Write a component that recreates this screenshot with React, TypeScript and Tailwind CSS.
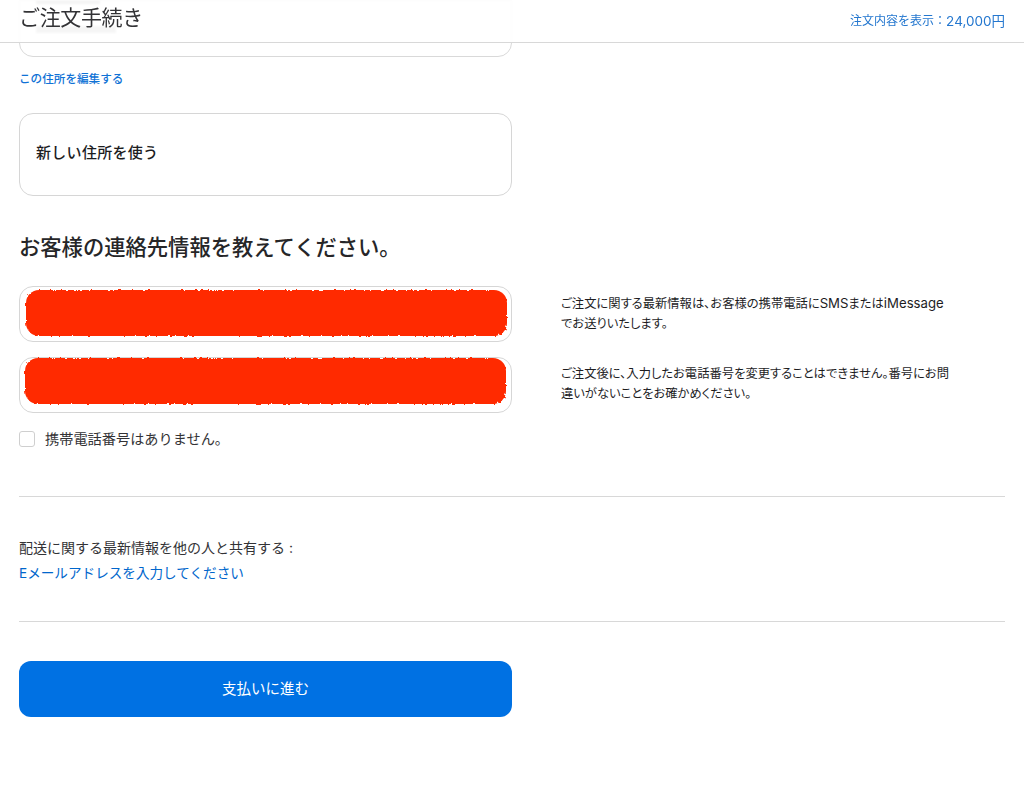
import React from 'react';

const FONT = 'font-["Inter","Noto_Sans_CJK_JP",sans-serif]';

// Scribbled-out red block laid over a redacted field
function Redaction({ className }: { className: string }) {
  return (
    <svg className={`absolute ${className}`} width="491" height="55" viewBox="0 0 491 55" aria-hidden="true">
      <filter id="scribble" x="-2%" y="-10%" width="104%" height="120%">
        <feTurbulence type="fractalNoise" baseFrequency="0.3" numOctaves="2" seed="4" />
        <feDisplacementMap in="SourceGraphic" scale="3" />
      </filter>
      <rect x="5" y="4" width="481" height="46" rx="13" fill="#ff2a00" filter="url(#scribble)" />
    </svg>
  );
}

function ContactField({ redactionClass }: { redactionClass: string }) {
  return (
    <div className="relative h-[56px] w-[493px] rounded-[14px] border border-[#d6d6d6] bg-white">
      <Redaction className={redactionClass} />
    </div>
  );
}

export default function App() {
  return (
    <div className={`h-[787px] w-[1024px] overflow-hidden bg-white text-[#1d1d1f] ${FONT}`}>
      <header className="relative z-10 flex h-[43px] items-center justify-between border-b border-[#d8d8d8] bg-white/90 px-[19px] backdrop-blur-[1px]">
        <h1 className="mb-[7px] text-[21px] leading-[28px] font-normal tracking-[-0.35px] text-[#333336]">ご注文手続き</h1>
        <a className="flex items-center text-[12px] leading-[16px] text-[#2477cf]">
          注文内容を表示：<span className="text-[13.5px]">24,000円</span>
        </a>
      </header>

      <main className="px-[19px]">
        {/* address card scrolled under the header */}
        <div className="-mt-[43px] h-[57px] w-[493px] rounded-b-[14px] border border-[#d9d9d9] bg-white px-[16px]">
          <div className="h-[3px] w-[64px] bg-[#8a8a8a]" />
          <div className="mt-[22px] h-[7px] w-[80px] bg-[#9a9a9a]" />
        </div>
        <a className="mt-[14px] block text-[11.6px] leading-[16px] font-medium text-[#0f72d6]">この住所を編集する</a>

        <div className="mt-[26px] flex h-[83px] w-[493px] items-center rounded-[14px] border border-[#d6d6d6] px-[16px] pb-[2px] text-[15px] font-medium tracking-[0.3px]">
          新しい住所を使う
        </div>

        <h2 className="mt-[36px] text-[21.3px] leading-[30px] font-medium text-[#262628]">お客様の連絡先情報を教えてください。</h2>

        <div className="mt-[24px] flex gap-[49px]">
          <div className="flex w-[493px] flex-col gap-[15px]">
            <ContactField redactionClass="-top-[1px] left-[1px]" />
            <ContactField redactionClass="-top-[4px] left-[0px]" />
            <label className="mt-[2px] flex h-[18px] items-center gap-[10px] text-[14.2px] text-[#333336]">
              <span className="h-[16px] w-[16px] rounded-[3px] border border-[#cfcfcf] bg-white" />
              携帯電話番号はありません。
            </label>
          </div>
          <div className="w-[400px] text-[12.3px] leading-[20px] text-[#1d1d1f] [font-feature-settings:'palt']">
            <p className="mt-[7px]">
              ご注文に関する最新情報は、お客様の携帯電話に<span className="text-[13.2px]">SMS</span>または<span className="text-[13.2px]">iMessage</span>
              <br />
              でお送りいたします。
            </p>
            <p className="mt-[30px]">
              ご注文後に、入力したお電話番号を変更することはできません。番号にお問
              <br />
              違いがないことをお確かめください。
            </p>
          </div>
        </div>

        <hr className="mt-[48px] border-[#d8d8d8]" />

        <p className="mt-[41px] text-[14px] leading-[20px] text-[#333336]">配送に関する最新情報を他の人と共有する :</p>
        <a className="mt-[5px] block text-[13.6px] leading-[20px] text-[#0066cc]">Eメールアドレスを入力してください</a>

        <hr className="mt-[38px] border-[#d8d8d8]" />

        <button className="mt-[39px] flex h-[56px] w-[493px] items-center justify-center rounded-[12px] bg-[#0071e3] text-[14.5px] font-normal text-white">
          支払いに進む
        </button>
      </main>
    </div>
  );
}
